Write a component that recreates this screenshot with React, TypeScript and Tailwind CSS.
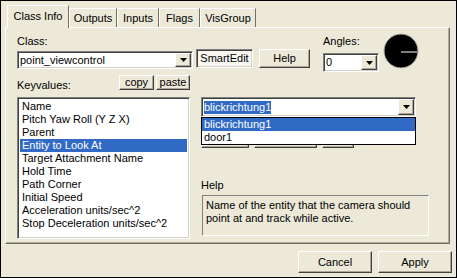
import React from "react";

const sunken =
    "border border-t-[#808080] border-l-[#808080] border-r-white border-b-white shadow-[inset_1px_1px_0_#404040,inset_-1px_-1px_0_#d4d0c8]";
const raised =
    "border border-t-white border-l-white border-r-[#404040] border-b-[#404040] shadow-[inset_-1px_-1px_0_#aca899]";

function Arrow() {
    return (
        <svg width="7" height="4" viewBox="0 0 7 4">
            <polygon points="0,0 7,0 3.5,4" fill="#000" />
        </svg>
    );
}

function Combo({ value, selected }: { value: string; selected?: boolean }) {
    return (
        <div className={`flex h-full bg-white ${sunken}`}>
            <div className="flex flex-1 items-center pl-[2px]">
                <span
                    className={`leading-[13px] ${
                        selected ? "bg-[#316ac5] text-white" : ""
                    }`}
                >
                    {value}
                </span>
            </div>
            <div
                className={`m-[1px] flex w-[16px] items-center justify-center bg-[#ece9d8] ${raised}`}
            >
                <Arrow />
            </div>
        </div>
    );
}

function Button({
    label,
    className,
}: {
    label: string;
    className: string;
}) {
    return (
        <div
            className={`flex items-center justify-center bg-[#ece9d8] ${raised} ${className}`}
        >
            {label}
        </div>
    );
}

const tabs = ["Outputs", "Inputs", "Flags", "VisGroup"];
const tabWidths = ["w-[48px]", "w-[42px]", "w-[41px]", "w-[56px]"];

const keys = [
    "Name",
    "Pitch Yaw Roll (Y Z X)",
    "Parent",
    "Entity to Look At",
    "Target Attachment Name",
    "Hold Time",
    "Path Corner",
    "Initial Speed",
    "Acceleration units/sec^2",
    "Stop Deceleration units/sec^2",
];

export default function App() {
    return (
        <div className="h-[278px] w-[457px] border border-black bg-[#ece9d8] font-['Liberation_Sans',Arial,sans-serif] text-[11px] text-black">
            {/* tabs */}
            <div className="flex h-[26px] items-end pl-[6px] pt-[4px]">
                <div className="relative z-10 -mb-[1px] flex h-[23px] w-[62px] items-start justify-center border-l border-r border-t border-l-white border-r-[#716f64] border-t-white bg-[#ece9d8] pt-[4px] leading-[13px]">
                    Class Info
                </div>
                {tabs.map((t, i) => (
                    <div
                        key={t}
                        className={`flex h-[19px] items-start justify-center border-l border-r border-t border-l-white border-r-[#716f64] border-t-white pt-[3px] leading-[13px] ${tabWidths[i]}`}
                    >
                        {t}
                    </div>
                ))}
            </div>

            {/* panel */}
            <div className="ml-[4px] h-[217px] w-[445px] border border-b-[#716f64] border-l-white border-r-[#716f64] border-t-white shadow-[inset_-1px_-1px_0_#aca899]">
                {/* top row */}
                <div className="flex h-[43px] items-start pl-[11px] pt-[5px]">
                    <div className="w-[176px]">
                        <div className="mt-[2px] h-[13px] leading-[13px]">Class:</div>
                        <div className="mt-[3px] h-[18px]">
                            <Combo value="point_viewcontrol" />
                        </div>
                    </div>
                    <div
                        className={`ml-[3px] mt-[16px] flex h-[19px] w-[57px] items-center justify-center bg-[#f7f6f1] ${sunken}`}
                    >
                        SmartEdit
                    </div>
                    <Button label="Help" className="ml-[6px] mt-[16px] h-[19px] w-[51px]" />
                    <div className="ml-[13px] w-[56px]">
                        <div className="mt-[2px] h-[13px] leading-[13px]">Angles:</div>
                        <div className="mt-[5px] h-[19px]">
                            <Combo value="0" />
                        </div>
                    </div>
                    <svg width="36" height="36" viewBox="0 0 36 36" className="ml-[4px]">
                        <circle cx="18" cy="18" r="17" fill="#000" stroke="#b8b6ae" strokeWidth="1" />
                        <line x1="18" y1="19" x2="34" y2="19" stroke="#fff" strokeWidth="1" />
                    </svg>
                </div>

                {/* lower area */}
                <div className="mt-[4px] flex items-start pl-[11px]">
                    <div className="w-[174px]">
                        <div className="flex h-[16px] items-start justify-between pr-[1px]">
                            <div className="mt-[4px] leading-[13px]">Keyvalues:</div>
                            <div className="flex gap-[2px]">
                                <Button label="copy" className="h-[15px] w-[35px]" />
                                <Button label="paste" className="h-[15px] w-[34px]" />
                            </div>
                        </div>
                        <div className={`mt-[6px] h-[142px] w-[173px] bg-white pl-[2px] pt-[2px] ${sunken}`}>
                            {keys.map((k) => (
                                <div
                                    key={k}
                                    className={`h-[13px] whitespace-nowrap pl-[2px] leading-[13px] ${
                                        k === "Entity to Look At"
                                            ? "mr-[2px] bg-[#316ac5] text-white"
                                            : ""
                                    }`}
                                >
                                    {k}
                                </div>
                            ))}
                        </div>
                    </div>

                    <div className="ml-[10px] w-[228px]">
                        <div className="relative mt-[22px] h-[20px] w-[215px]">
                            <Combo value="blickrichtung1" selected />
                            <div className="absolute left-0 top-[20px] z-10 w-[215px] border border-black bg-white">
                                <div className="h-[13px] bg-[#316ac5] pl-[2px] leading-[13px] text-white">
                                    blickrichtung1
                                </div>
                                <div className="h-[13px] pl-[2px] leading-[13px]">door1</div>
                            </div>
                        </div>
                        <div className="mt-[11px] flex h-[20px] gap-[5px]">
                            <Button label="" className="h-[20px] w-[48px]" />
                            <Button label="" className="h-[20px] w-[63px]" />
                            <Button label="" className="h-[20px] w-[32px]" />
                        </div>
                        <div className="mt-[30px] h-[14px] leading-[14px]">Help</div>
                        <div className={`ml-[1px] mt-[3px] h-[41px] w-[227px] px-[3px] pt-[3px] leading-[13px] ${sunken} shadow-none`}>
                            Name of the entity that the camera should point at and track while active.
                        </div>
                    </div>
                </div>
            </div>

            {/* bottom buttons */}
            <div className="flex justify-end gap-[6px] pr-[4px] pt-[7px]">
                <Button label="Cancel" className="h-[22px] w-[74px]" />
                <Button label="Apply" className="h-[22px] w-[74px]" />
            </div>
        </div>
    );
}
